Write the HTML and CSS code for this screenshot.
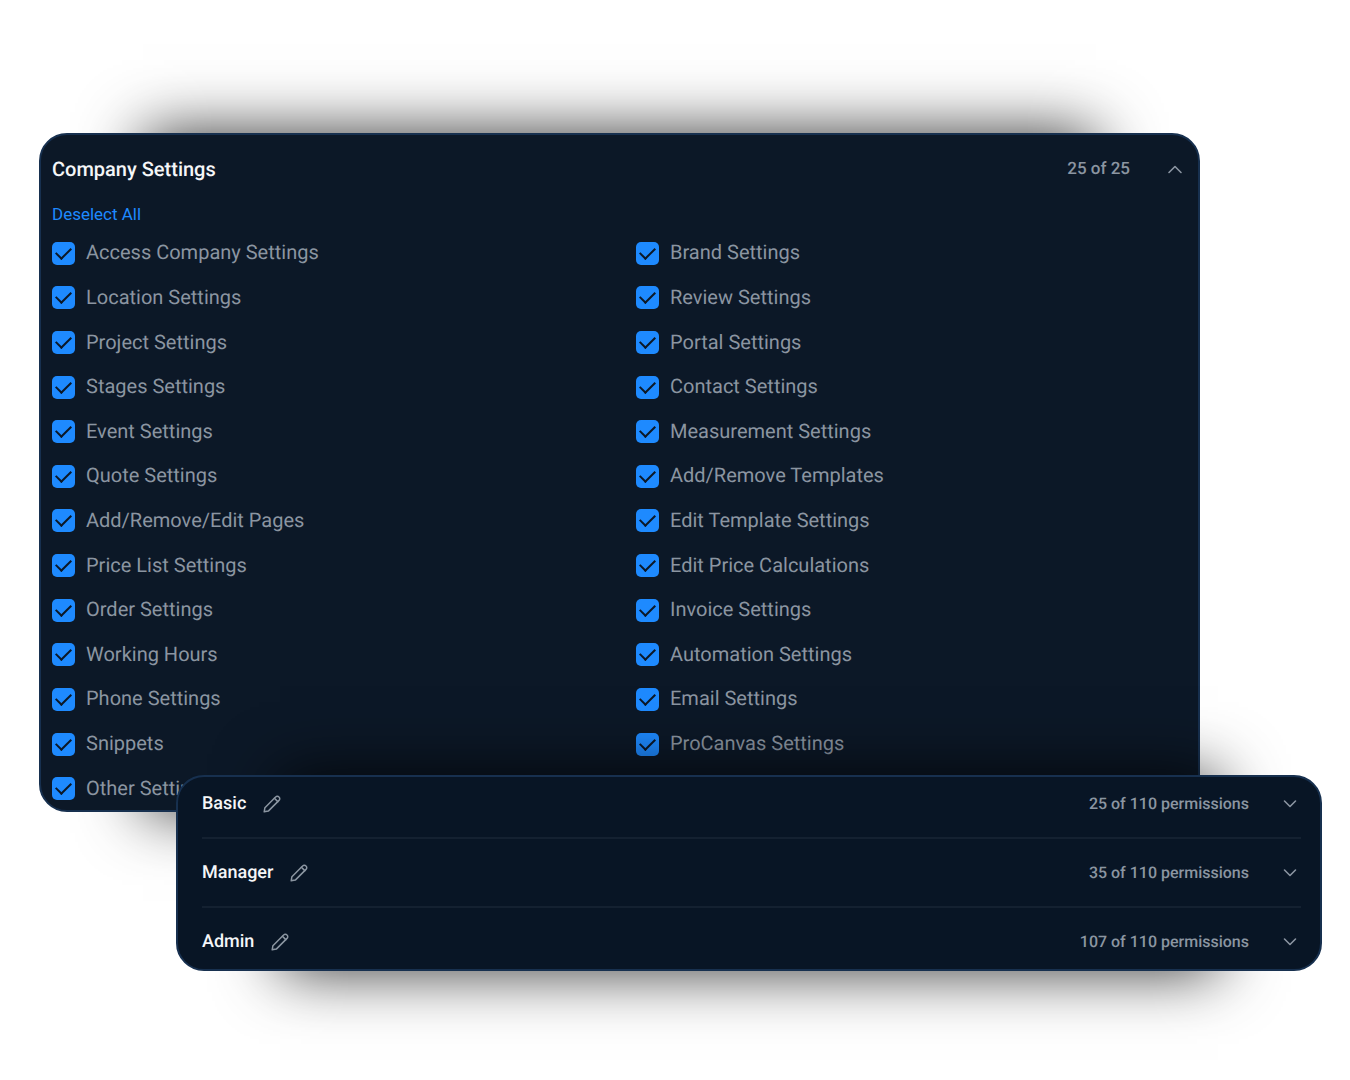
FILE: index.html
```html
<!DOCTYPE html>
<html lang="en">
<head>
  <meta charset="UTF-8">
  <meta name="viewport" content="width=device-width, initial-scale=1">
  <title>Permissions</title>
  <link rel="stylesheet" href="styles.css">
</head>
<body>
  <svg class="sprite" aria-hidden="true">
    <symbol id="icon-chevron-down" viewBox="0 0 22 22">
      <path d="M5.500 8 11 13.500l5.500-5.500"/>
    </symbol>
    <symbol id="icon-chevron-up" viewBox="0 0 22 22">
      <path d="M5 14.500l6-6 6 6"/>
    </symbol>
    <symbol id="icon-pencil" viewBox="0 0 18 18">
      <path d="M1.200 16.800l.7-4.100L12.600 2a2.300 2.300 0 0 1 3.400 0a2.300 2.300 0 0 1 0 3.400L5.300 16.100z"/>
      <path d="M11.400 3.200l3.400 3.400"/>
    </symbol>
  </svg>

  <main class="stage">
    <div class="card-wrap card-wrap-settings">
      <section class="card settings-card">
        <header class="settings-header">
          <h2>Company Settings</h2>
          <span class="count">25 of 25</span>
          <button type="button" class="icon-button" aria-label="Collapse">
            <svg class="chevron"><use href="#icon-chevron-up"/></svg>
          </button>
        </header>
        <button type="button" class="deselect-button">Deselect All</button>
        <div class="settings-grid">
          <label class="option"><input type="checkbox" checked>Access Company Settings</label>
          <label class="option"><input type="checkbox" checked>Brand Settings</label>
          <label class="option"><input type="checkbox" checked>Location Settings</label>
          <label class="option"><input type="checkbox" checked>Review Settings</label>
          <label class="option"><input type="checkbox" checked>Project Settings</label>
          <label class="option"><input type="checkbox" checked>Portal Settings</label>
          <label class="option"><input type="checkbox" checked>Stages Settings</label>
          <label class="option"><input type="checkbox" checked>Contact Settings</label>
          <label class="option"><input type="checkbox" checked>Event Settings</label>
          <label class="option"><input type="checkbox" checked>Measurement Settings</label>
          <label class="option"><input type="checkbox" checked>Quote Settings</label>
          <label class="option"><input type="checkbox" checked>Add/Remove Templates</label>
          <label class="option"><input type="checkbox" checked>Add/Remove/Edit Pages</label>
          <label class="option"><input type="checkbox" checked>Edit Template Settings</label>
          <label class="option"><input type="checkbox" checked>Price List Settings</label>
          <label class="option"><input type="checkbox" checked>Edit Price Calculations</label>
          <label class="option"><input type="checkbox" checked>Order Settings</label>
          <label class="option"><input type="checkbox" checked>Invoice Settings</label>
          <label class="option"><input type="checkbox" checked>Working Hours</label>
          <label class="option"><input type="checkbox" checked>Automation Settings</label>
          <label class="option"><input type="checkbox" checked>Phone Settings</label>
          <label class="option"><input type="checkbox" checked>Email Settings</label>
          <label class="option"><input type="checkbox" checked>Snippets</label>
          <label class="option"><input type="checkbox" checked>ProCanvas Settings</label>
          <label class="option"><input type="checkbox" checked>Other Settings</label>
        </div>
      </section>
    </div>

    <div class="card-wrap card-wrap-roles">
      <section class="card roles-card">
        <div class="role">
          <h3>Basic</h3>
          <button type="button" class="icon-button edit-button" aria-label="Edit Basic">
            <svg class="pencil"><use href="#icon-pencil"/></svg>
          </button>
          <span class="count">25 of 110 permissions</span>
          <button type="button" class="icon-button" aria-label="Expand Basic">
            <svg class="chevron"><use href="#icon-chevron-down"/></svg>
          </button>
        </div>
        <div class="role">
          <h3>Manager</h3>
          <button type="button" class="icon-button edit-button" aria-label="Edit Manager">
            <svg class="pencil"><use href="#icon-pencil"/></svg>
          </button>
          <span class="count">35 of 110 permissions</span>
          <button type="button" class="icon-button" aria-label="Expand Manager">
            <svg class="chevron"><use href="#icon-chevron-down"/></svg>
          </button>
        </div>
        <div class="role">
          <h3>Admin</h3>
          <button type="button" class="icon-button edit-button" aria-label="Edit Admin">
            <svg class="pencil"><use href="#icon-pencil"/></svg>
          </button>
          <span class="count">107 of 110 permissions</span>
          <button type="button" class="icon-button" aria-label="Expand Admin">
            <svg class="chevron"><use href="#icon-chevron-down"/></svg>
          </button>
        </div>
      </section>
    </div>
  </main>
</body>
</html>
```

FILE: styles.css
```css
:root {
  --settings-bg: #0c1827;
  --roles-bg: #081525;
  --border-color: #17304f;
  --divider-color: #142131;
  --heading-color: #f5f6f8;
  --text-color: #8b95a1;
  --primary-color: #1e8aff;
}

* {
  box-sizing: border-box;
}

body {
  margin: 0;
  background-color: #ffffff;
  color: var(--text-color);
  font-family: Roboto, "Liberation Sans", Arial, sans-serif;
  font-size: 20px;
  line-height: 24px;
  text-rendering: geometricPrecision;
}

h2, h3 {
  margin: 0;
  font-weight: 500;
  color: var(--heading-color);
}

h2 {
  font-size: 20px;
}

h3 {
  font-size: 18px;
}

button {
  padding: 0;
  border: none;
  background: none;
  font: inherit;
  cursor: pointer;
}

.sprite {
  display: none;
}

.stage {
  padding: 133px 28px 100px 39px;
}

/* the wrapper carries the soft shadow, narrower than the card itself */
.card-wrap {
  position: relative;
  isolation: isolate;
}

.card-wrap::before {
  content: "";
  position: absolute;
  z-index: -1;
  inset: 0 104px;
  box-shadow: 0 0 60px rgba(0, 0, 0, 0.8);
}

.card-wrap-settings {
  margin-right: 122px;
}

.card-wrap-roles {
  margin-top: -37px;
  margin-left: 137px;
}

.card {
  border: 2px solid var(--border-color);
  border-radius: 28px;
  overflow: hidden;
}

.settings-card {
  padding: 0 12px 0 11px;
  background-color: var(--settings-bg);
}

.settings-header {
  display: flex;
  align-items: center;
  height: 68px;
}

.count {
  margin-left: auto;
  margin-right: 34px;
  font-size: 17px;
  font-weight: 500;
}

.icon-button {
  display: flex;
  color: var(--text-color);
}

.icon-button svg {
  fill: none;
  stroke: currentColor;
  stroke-linecap: round;
  stroke-linejoin: round;
}

.chevron {
  width: 22px;
  height: 22px;
  stroke-width: 1.6;
}

.pencil {
  width: 18px;
  height: 18px;
  stroke-width: 1.5;
}

.deselect-button {
  display: block;
  color: var(--primary-color);
  font-size: 17px;
  line-height: 22px;
}

.settings-grid {
  display: grid;
  grid-template-columns: 1fr 1fr;
  grid-auto-rows: 1fr;
  column-gap: 34px;
  height: 580px;
  margin-top: 5px;
}

.option {
  display: flex;
  align-items: center;
  gap: 11px;
}

.option input {
  display: grid;
  place-items: center;
  width: 23px;
  height: 23px;
  margin: 2px 0 0;
  border-radius: 5px;
  background-color: var(--primary-color);
  appearance: none;
}

.option input:checked::after {
  content: "";
  width: 7px;
  height: 13px;
  margin-bottom: 4px;
  border: solid var(--settings-bg);
  border-width: 0 2px 2px 0;
  transform: rotate(45deg);
}

.roles-card {
  padding: 0 19px 0 24px;
  background-color: var(--roles-bg);
}

.role {
  display: flex;
  align-items: center;
  padding: 22px 0 21px;
  border-bottom: 2px solid var(--divider-color);
}

.role:first-child {
  padding-top: 15px;
}

.role:last-child {
  padding-bottom: 15px;
  border-bottom: none;
}

.role .count {
  margin-right: 30px;
  font-size: 16px;
}

.edit-button {
  margin-left: 17px;
}
```
